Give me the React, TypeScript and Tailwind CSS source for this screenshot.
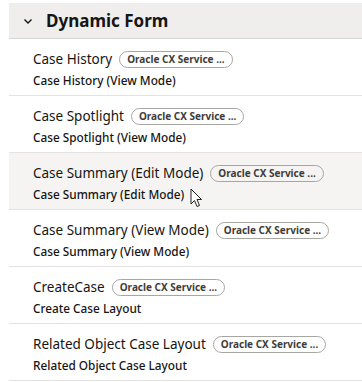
const rows = [
  { title: "Case History", desc: "Case History (View Mode)" },
  { title: "Case Spotlight", desc: "Case Spotlight (View Mode)" },
  { title: "Case Summary (Edit Mode)", desc: "Case Summary (Edit Mode)", hover: true },
  { title: "Case Summary (View Mode)", desc: "Case Summary (View Mode)" },
  { title: "CreateCase", desc: "Create Case Layout" },
  { title: "Related Object Case Layout", desc: "Related Object Case Layout" },
];

export default function App() {
  return (
    <div
      className="w-[362px] h-[382px] overflow-hidden bg-white pl-[9px] pt-[3px] text-[#161513]"
      style={{ fontFamily: '"Noto Sans", "Open Sans", sans-serif' }}
    >
      <div className="flex h-[36px] items-center border-b border-[#d6d5d3] bg-[#efeeec] pl-[14px]">
        <svg width="10" height="10" viewBox="0 0 10 10" className="mr-[13px]">
          <path d="M1.5 3.5 L5 7 L8.5 3.5" fill="none" stroke="#161513" strokeWidth="1.4" />
        </svg>
        <span className="text-[17px] font-bold leading-none">Dynamic Form</span>
      </div>

      {rows.map((row, i) => (
        <div
          key={i}
          className={`relative flex h-[57px] flex-col border-b border-[#e4e3e1] pl-[24px] pt-[10px] ${
            row.hover ? "bg-[#f5f4f2]" : ""
          }`}
        >
          <div className="flex items-center gap-[7px]">
            <span className="text-[13.5px] leading-[20px]">{row.title}</span>
            <span className="rounded-full border border-[#a8a6a3] px-[7px] text-[10px] font-bold leading-[15px] text-[#3f3d3a]">
              Oracle CX Service ...
            </span>
          </div>
          <span className="mt-[3px] text-[11.8px] font-medium leading-[16px]">{row.desc}</span>
          {row.hover && (
            <svg
              width="13"
              height="20"
              viewBox="0 0 13 20"
              className="absolute left-[181px] top-[35px]"
            >
              <path
                d="M1 1 L1 16 L4.5 12.5 L7 18.5 L9.5 17.5 L7 11.5 L11.5 11.5 Z"
                fill="white"
                stroke="#222"
                strokeWidth="1"
                strokeLinejoin="round"
              />
            </svg>
          )}
        </div>
      ))}
    </div>
  );
}
